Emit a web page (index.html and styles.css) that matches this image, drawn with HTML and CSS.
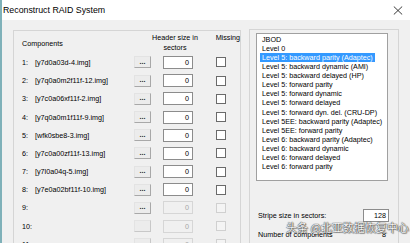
FILE: index.html
```html
<!DOCTYPE html>
<html>
<head>
<meta charset="utf-8">
<link rel="stylesheet" href="styles.css">
</head>
<body>
<div class="window">
  <div class="titlebar">
    <span class="title">Reconstruct RAID System</span>
    <svg class="close" width="10" height="9" viewBox="0 0 10 9"><path d="M0.8 0.5L9.2 8.5M9.2 0.5L0.8 8.5" stroke="#222" stroke-width="0.9" fill="none"/></svg>
  </div>
  <div class="content">
    <div class="group">
      <div class="head">
        <div class="h-comp">Components</div>
        <div class="h-size">Header size in<br>sectors</div>
        <div class="h-miss">Missing</div>
      </div>
      <div class="row"><span class="num">1:</span><span class="file">[y7d0a03d-4.img]</span><span class="btn">...</span><span class="inp">0</span><span class="chk"></span></div>
      <div class="row"><span class="num">2:</span><span class="file">[y7q0a0m2f11f-12.img]</span><span class="btn">...</span><span class="inp">0</span><span class="chk"></span></div>
      <div class="row"><span class="num">3:</span><span class="file">[y7c0a06xf11f-2.img]</span><span class="btn">...</span><span class="inp">0</span><span class="chk"></span></div>
      <div class="row"><span class="num">4:</span><span class="file">[y7q0a0m1f11f-9.img]</span><span class="btn">...</span><span class="inp">0</span><span class="chk"></span></div>
      <div class="row"><span class="num">5:</span><span class="file">[wfk0sbe8-3.img]</span><span class="btn">...</span><span class="inp">0</span><span class="chk"></span></div>
      <div class="row"><span class="num">6:</span><span class="file">[y7c0a00zf11f-13.img]</span><span class="btn">...</span><span class="inp">0</span><span class="chk"></span></div>
      <div class="row"><span class="num">7:</span><span class="file">[y7l0a04q-5.img]</span><span class="btn">...</span><span class="inp">0</span><span class="chk"></span></div>
      <div class="row"><span class="num">8:</span><span class="file">[y7e0a02bf11f-10.img]</span><span class="btn">...</span><span class="inp">0</span><span class="chk"></span></div>
      <div class="row off"><span class="num">9:</span><span class="file"></span><span class="btn">...</span><span class="inp">0</span><span class="chk"></span></div>
      <div class="row off"><span class="num">10:</span><span class="file"></span><span class="btn dis"></span><span class="inp">0</span><span class="chk"></span></div>
      <div class="row off"><span class="num">11:</span><span class="file"></span><span class="btn dis"></span><span class="inp">0</span><span class="chk"></span></div>
    </div>
    <div class="panel">
      <ul class="list">
        <li>JBOD</li>
        <li>Level 0</li>
        <li class="sel">Level 5: backward parity (Adaptec)</li>
        <li>Level 5: backward dynamic (AMI)</li>
        <li>Level 5: backward delayed (HP)</li>
        <li>Level 5: forward parity</li>
        <li>Level 5: forward dynamic</li>
        <li>Level 5: forward delayed</li>
        <li>Level 5: forward dyn. del. (CRU-DP)</li>
        <li>Level 5EE: backward parity (Adaptec)</li>
        <li>Level 5EE: forward parity</li>
        <li>Level 6: backward parity (Adaptec)</li>
        <li>Level 6: backward dynamic</li>
        <li>Level 6: forward delayed</li>
        <li>Level 6: forward parity</li>
      </ul>
      <div class="field stripe"><span class="lbl">Stripe size in sectors:</span><span class="inp wide">128</span></div>
      <div class="field count"><span class="lbl">Number of components</span><span class="val">8</span></div>
    </div>
  </div>
  <div class="watermark">头条 @北亚数据恢复中心</div>
</div>
</body>
</html>
```

FILE: styles.css
```css
html, body {
  margin: 0;
  padding: 0;
}
body {
  width: 410px;
  height: 243px;
  overflow: hidden;
  background: #f0f0f0;
  font-family: "Liberation Sans", Arial, sans-serif;
  font-size: 7.2px;
  color: #000;
}
.window {
  position: relative;
  height: 243px;
  border-left: 2px solid #7fb1b9;
  background: #f0f0f0;
  overflow: hidden;
}
.titlebar {
  height: 20px;
  background: #fff;
  display: flex;
  align-items: center;
  justify-content: space-between;
  padding-left: 1px;
  padding-right: 7px;
}
.title {
  font-size: 8.8px;
  color: #000;
}
.close {
  display: block;
}
.content {
  display: flex;
  align-items: flex-start;
  padding-left: 11px;
  padding-top: 10px;
}
.group {
  box-sizing: border-box;
  width: 228px;
  height: 260px;
  flex: none;
  border: 1px solid #d5d5d5;
  padding-left: 8px;
}
.head {
  display: flex;
  align-items: center;
  height: 20.4px;
  padding-top: 2px;
}
.h-comp {
  width: 112px;
}
.h-size {
  margin-left: 17px;
  width: 52px;
  text-align: center;
  line-height: 10px;
}
.h-miss {
  margin-left: 15px;
  align-self: flex-start;
  line-height: 10px;
}
.row {
  display: flex;
  align-items: center;
  height: 18.2px;
}
.num {
  width: 13px;
}
.file {
  width: 99px;
  white-space: nowrap;
}
.btn {
  box-sizing: border-box;
  width: 17px;
  height: 12px;
  border: 1px solid #e3e3e3;
  border-right-color: #a8a8a8;
  border-bottom-color: #a8a8a8;
  background: #ececec;
  display: flex;
  align-items: center;
  justify-content: center;
  font-size: 7px;
  font-weight: bold;
  line-height: 8px;
  padding-bottom: 1px;
  color: #222;
}
.btn.dis {
  border-right-color: #c8c8c8;
  border-bottom-color: #c8c8c8;
}
.inp {
  box-sizing: border-box;
  margin-left: 12px;
  width: 30px;
  height: 13px;
  border: 1px solid #8c8c8c;
  background: #fff;
  text-align: right;
  padding-right: 3px;
  line-height: 11px;
}
.chk {
  box-sizing: border-box;
  margin-left: 23px;
  width: 10px;
  height: 10px;
  border: 1px solid #6a6a6a;
  background: #fff;
}
.row.off .inp {
  border-color: #d6d6d6;
  background: #f0f0f0;
  color: #a6a6a6;
}
.row.off .chk {
  border-color: #d0d0d0;
  background: #f4f4f4;
}
.panel {
  box-sizing: border-box;
  flex: none;
  width: 150px;
  height: 260px;
  margin-left: 8px;
  margin-top: -1px;
  border: 1px solid #d5d5d5;
  padding: 3px 10px 0 6px;
}
.list {
  box-sizing: border-box;
  list-style: none;
  margin: 0;
  width: 132px;
  height: 148px;
  border: 1px solid #a0a0a0;
  background: #fff;
  padding: 0.5px 0 0 3px;
}
.list li {
  width: fit-content;
  padding: 0 2px;
  line-height: 9.14px;
  height: 9.14px;
  white-space: nowrap;
}
.list li.sel {
  background: #3399ff;
  color: #fff;
}
.field {
  display: flex;
  align-items: center;
  justify-content: space-between;
  height: 13px;
  margin-right: -1px;
}
.field .lbl {
  padding-left: 2px;
}
.stripe {
  margin-top: 28px;
}
.count {
  margin-top: 5.5px;
}
.inp.wide {
  margin-left: 0;
  width: 26px;
  padding-right: 2px;
}
.val {
  padding-right: 3px;
}
.watermark {
  position: absolute;
  left: 284px;
  top: 220px;
  font-family: "Noto Sans CJK SC", sans-serif;
  font-size: 11px;
  line-height: 14px;
  color: #f4f4f4;
  text-shadow: 0 0 1px #333, 0 0 1px #333, 1px 1px 1px rgba(0,0,0,0.4);
  white-space: nowrap;
}
```
